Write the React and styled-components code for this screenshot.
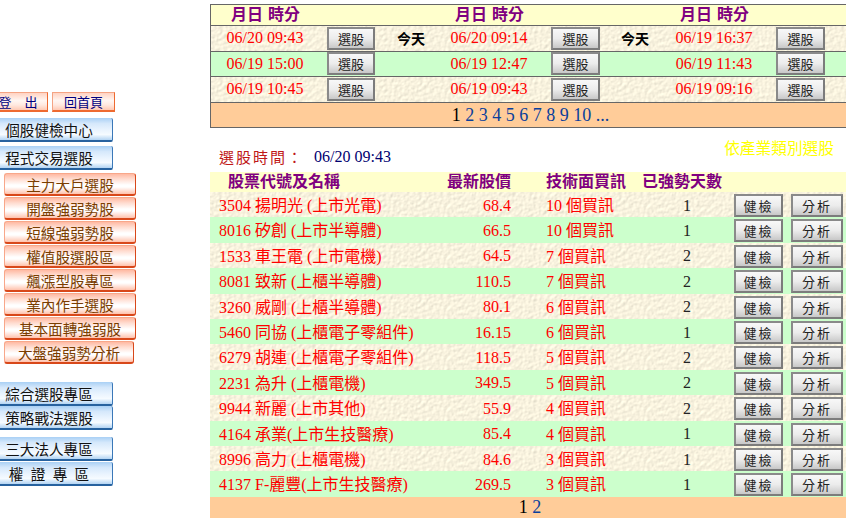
import React from 'react';
import styled, { createGlobalStyle, css } from 'styled-components';

const Global = createGlobalStyle`
  html, body { margin: 0; padding: 0; background: #fff; overflow: hidden; }
  body { font-family: "Liberation Serif", "Noto Sans CJK TC", serif; font-size: 16px; }
`;

const paper = "data:image/svg+xml," + encodeURIComponent(
  `<svg xmlns='http://www.w3.org/2000/svg' width='200' height='120'><filter id='n' x='0' y='0' width='100%' height='100%' color-interpolation-filters='sRGB'><feTurbulence type='fractalNoise' baseFrequency='0.28' numOctaves='3' seed='4' stitchTiles='stitch'/><feColorMatrix type='matrix' values='0 0 0 0 0 0 0 0 0 0 0 0 0 0 0 1 0 0 0 0'/><feDiffuseLighting lighting-color='#f9f3df' surfaceScale='0.35' diffuseConstant='1.13'><feDistantLight azimuth='45' elevation='62'/></feDiffuseLighting></filter><rect width='200' height='120' filter='url(#n)'/></svg>`
);

const Page = styled.div`
  display: flex;
  width: 846px;
  height: 518px;
  overflow: hidden;
`;

const Sidebar = styled.nav`
  flex: 0 0 210px;
  display: flex;
  flex-direction: column;
  align-items: flex-start;
  padding-top: 92px;
  box-sizing: border-box;
`;

const TopLinks = styled.div`
  display: flex;
  gap: 4px;
  margin: 0 0 6px -12px;
`;

const TopLink = styled.a`
  box-sizing: border-box;
  width: ${p => p.$w}px;
  height: 20px;
  display: flex;
  align-items: center;
  justify-content: center;
  font-size: 13px;
  color: #000080;
  white-space: pre;
  background: linear-gradient(#ffd3c2, #fff6f2 45%, #ffe9e0 70%, #ffc9b4);
  border: 1px solid #f4a484;
  border-bottom: 2px solid #ee6a30;
  border-right-color: #ee6a30;
`;

const BlueBtn = styled.a`
  box-sizing: border-box;
  width: 127px;
  height: 24px;
  margin-left: -14px;
  margin-top: ${p => p.$mt || 0}px;
  display: flex;
  align-items: center;
  justify-content: center;
  font-size: 14.6px;
  color: #111;
  white-space: pre;
  border-radius: 2px;
  background: linear-gradient(#a9d0f5, #d5e8fb 25%, #eaf4fe 55%, #f6fbff 75%, #b3d4f3);
  border-right: 1px solid #3a78b8;
  border-bottom: 2px solid #27629f;
`;

const RedGroup = styled.div`
  display: flex;
  flex-direction: column;
  align-items: flex-start;
  margin: 3px 0 17px;
`;

const RedBtn = styled.a`
  box-sizing: border-box;
  width: ${p => p.$w || 132}px;
  height: 23px;
  margin-left: 4px;
  margin-bottom: 1px;
  display: flex;
  align-items: center;
  justify-content: center;
  font-size: 14.6px;
  color: #7a3d00;
  border-radius: 3px;
  background: linear-gradient(#ffb9a2, #ffdcd0 25%, #fff 55%, #fff 65%, #ffc2ad);
  border: 1px solid #f8a78a;
  border-bottom: 2px solid #d8481a;
  border-right-color: #d8481a;
`;

const Main = styled.main`
  flex: 1;
  min-width: 0;
  padding-top: 4px;
`;

const topCols = '106px 68px 52px 102px 73px 46px 110px 65px 1fr';

const TimeTable = styled.section`
  border: 1px solid #666;
  border-right: 0;
  box-sizing: border-box;
  height: 124px;
  margin-bottom: 12px;
  display: flex;
  flex-direction: column;
`;

const bands = {
  head: css`background: #ffffcc;`,
  paper: css`background: #f8f2e2 url("${paper}");`,
  green: css`background: #ccffcc;`,
};

const TimeHead = styled.div`
  ${bands.head}
  display: grid;
  grid-template-columns: ${topCols};
  height: 20px;
  align-items: center;
  text-align: center;
  border-bottom: 1px solid #666;
  color: #800080;
  font-weight: 700;
  font-size: 16px;
  line-height: 20px;
`;

const HeadCell = styled.span`
  grid-column: ${p => p.$col};
  padding-left: 3px;
  word-spacing: 1px;
`;

const TimeRow = styled.div`
  ${p => bands[p.$band]}
  display: grid;
  grid-template-columns: ${topCols};
  flex: 1;
  align-items: center;
  text-align: center;
  border-bottom: 1px solid #666;
`;

const TimeText = styled.span`
  color: #ff0000;
  font-size: 16px;
  padding-left: 2px;
  white-space: nowrap;
`;

const Today = styled.span`
  font-size: 14px;
  font-weight: 700;
  color: #000;
`;

const GrayBtn = styled.button`
  box-sizing: border-box;
  width: ${p => p.$w}px;
  height: 23px;
  padding: 0;
  justify-self: ${p => (p.$end ? 'end' : 'center')};
  margin-right: ${p => (p.$end ? 3 : 0)}px;
  font-family: "Liberation Sans", "Noto Sans CJK TC", sans-serif;
  font-size: 13px;
  letter-spacing: ${p => p.$sp || 0}px;
  color: #222;
  background: linear-gradient(#f8f8f8, #ececec 50%, #c8c8c8);
  border: 2px solid #7c7c7c;
  border-top-color: #8a8a8a;
  border-left-color: #8a8a8a;
`;

const Pager = styled.div`
  height: ${p => p.$h}px;
  flex: ${p => (p.$fill ? 1 : 'none')};
  background: #ffcc99;
  display: flex;
  align-items: center;
  justify-content: center;
  padding-left: 4px;
  font-size: 18px;
  line-height: 20px;
  color: #000;
  gap: 4.5px;
`;

const PageLink = styled.a`
  color: #0a3f9c;
`;

const PickBar = styled.div`
  position: relative;
  height: 32px;
`;

const PickLabel = styled.span`
  position: absolute;
  left: 9px;
  bottom: 5px;
  color: #c01818;
  font-size: 15px;
  letter-spacing: 2px;
`;

const PickTime = styled.span`
  position: absolute;
  left: 104px;
  bottom: 6px;
  color: #000070;
  font-size: 16px;
`;

const Category = styled.a`
  position: absolute;
  right: 12px;
  top: -4px;
  color: #ffff00;
  font-size: 15.7px;
`;

const stockCols = '220px 81px 35px 96px 89px 55px 1fr';

const StockHead = styled.div`
  ${bands.head}
  display: grid;
  grid-template-columns: ${stockCols};
  height: 20px;
  align-items: center;
  color: #800080;
  font-weight: 700;
  font-size: 16px;
  line-height: 20px;
  white-space: nowrap;
`;

const StockHeadCell = styled.span`
  grid-column: ${p => p.$col};
  padding-left: ${p => p.$pl || 0}px;
  padding-bottom: 2px;
  text-align: ${p => p.$align || 'left'};
`;

const StockRow = styled.div`
  ${p => bands[p.$band]}
  display: grid;
  grid-template-columns: ${stockCols};
  height: 25.42px;
  align-items: center;
  color: #ff0000;
  font-size: 16px;
  white-space: nowrap;
`;

const Name = styled.span`
  padding-left: 9px;
  margin-bottom: 3px;
`;

const Price = styled.span`
  text-align: right;
`;

const Signal = styled.span`
  grid-column: 4;
  margin-bottom: 3px;
`;

const Days = styled.span`
  text-align: center;
  padding-left: 1px;
  color: #222;
`;

const times = [
  [['06/20 09:43', '06/20 09:14', '06/19 16:37'], 'paper', true],
  [['06/19 15:00', '06/19 12:47', '06/19 11:43'], 'green', false],
  [['06/19 10:45', '06/19 09:43', '06/19 09:16'], 'paper', false],
];

const stocks = [
  ['3504 揚明光 (上市光電)', '68.4', '10 個買訊', 1],
  ['8016 矽創 (上市半導體)', '66.5', '10 個買訊', 1],
  ['1533 車王電 (上市電機)', '64.5', '7 個買訊', 2],
  ['8081 致新 (上櫃半導體)', '110.5', '7 個買訊', 2],
  ['3260 威剛 (上櫃半導體)', '80.1', '6 個買訊', 2],
  ['5460 同協 (上櫃電子零組件)', '16.15', '6 個買訊', 1],
  ['6279 胡連 (上櫃電子零組件)', '118.5', '5 個買訊', 2],
  ['2231 為升 (上櫃電機)', '349.5', '5 個買訊', 2],
  ['9944 新麗 (上市其他)', '55.9', '4 個買訊', 2],
  ['4164 承業(上市生技醫療)', '85.4', '4 個買訊', 1],
  ['8996 高力 (上櫃電機)', '84.6', '3 個買訊', 1],
  ['4137 F-麗豐(上市生技醫療)', '269.5', '3 個買訊', 1],
];

const redItems = ['主力大戶選股', '開盤強弱勢股', '短線強弱勢股', '權值股選股區', '飆漲型股專區', '業內作手選股', '基本面轉強弱股'];

export default function App() {
  return (
    <>
      <Global />
      <Page>
        <Sidebar>
          <TopLinks>
            <TopLink $w={60}>登    出</TopLink>
            <TopLink $w={63}>回首頁</TopLink>
          </TopLinks>
          <BlueBtn>個股健檢中心</BlueBtn>
          <BlueBtn $mt={4}>程式交易選股</BlueBtn>
          <RedGroup>
            {redItems.map(t => <RedBtn key={t}>{t}</RedBtn>)}
            <RedBtn $w={130}>大盤強弱勢分析</RedBtn>
          </RedGroup>
          <BlueBtn>綜合選股專區</BlueBtn>
          <BlueBtn>策略戰法選股</BlueBtn>
          <BlueBtn $mt={7}>三大法人專區</BlueBtn>
          <BlueBtn $mt={1}>權  證  專  區</BlueBtn>
        </Sidebar>
        <Main>
          <TimeTable>
            <TimeHead>
              <HeadCell $col={1}>月日 時分</HeadCell>
              <HeadCell $col={4}>月日 時分</HeadCell>
              <HeadCell $col={7}>月日 時分</HeadCell>
            </TimeHead>
            {times.map(([t, band, today], i) => (
              <TimeRow key={i} $band={band}>
                <TimeText>{t[0]}</TimeText>
                <GrayBtn $w={48}>選股</GrayBtn>
                <Today>{today ? '今天' : ''}</Today>
                <TimeText>{t[1]}</TimeText>
                <GrayBtn $w={49}>選股</GrayBtn>
                <Today>{today ? '今天' : ''}</Today>
                <TimeText>{t[2]}</TimeText>
                <GrayBtn $w={49}>選股</GrayBtn>
              </TimeRow>
            ))}
            <Pager $fill>
              <span>1</span>
              {[2, 3, 4, 5, 6, 7, 8, 9, 10].map(n => <PageLink key={n}>{n}</PageLink>)}
              <PageLink>...</PageLink>
            </Pager>
          </TimeTable>
          <PickBar>
            <PickLabel>選股時間：</PickLabel>
            <PickTime>06/20 09:43</PickTime>
            <Category>依產業類別選股</Category>
          </PickBar>
          <StockHead>
            <StockHeadCell $col={1} $pl={18}>股票代號及名稱</StockHeadCell>
            <StockHeadCell $col={2} $align="right">最新股價</StockHeadCell>
            <StockHeadCell $col={4}>技術面買訊</StockHeadCell>
            <StockHeadCell $col={5}>已強勢天數</StockHeadCell>
          </StockHead>
          {stocks.map((s, i) => (
            <StockRow key={s[0]} $band={i % 2 ? 'green' : 'paper'}>
              <Name>{s[0]}</Name>
              <Price>{s[1]}</Price>
              <Signal>{s[2]}</Signal>
              <Days>{s[3]}</Days>
              <GrayBtn $w={49} $sp={2}>健檢</GrayBtn>
              <GrayBtn $w={52} $sp={2} $end>分析</GrayBtn>
            </StockRow>
          ))}
          <Pager $h={21}>
            <span>1</span>
            <PageLink>2</PageLink>
          </Pager>
        </Main>
      </Page>
    </>
  );
}
